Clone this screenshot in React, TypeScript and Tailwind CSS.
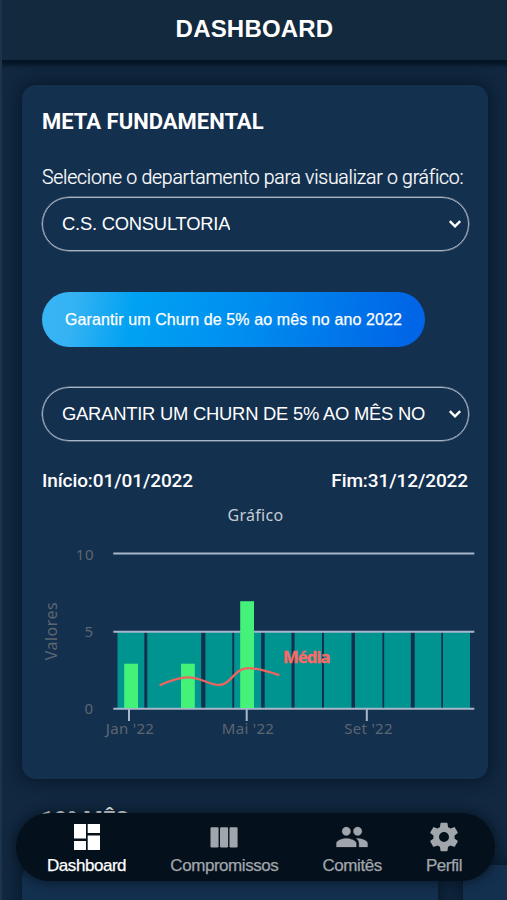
import React from 'react';

interface SelectFieldProps {
    value: string;
}

const SelectField: React.FC<SelectFieldProps> = ({ value }) => (
    <button type="button" className="flex h-[54px] w-[427px] items-center justify-between rounded-full border border-[#a9b6c6] pl-[19px] pr-[6px] text-left font-['Liberation_Sans',Arial,sans-serif] text-[18.4px] tracking-[-0.24px] text-white shadow-[0_0_0_0.5px_#8796a9]">
        <span className="overflow-hidden whitespace-nowrap">{value}</span>
        <svg className="h-[14px] w-[14px] shrink-0" viewBox="0 0 14 14" fill="none" stroke="white" strokeWidth="2.4">
            <path d="M1.8 4.2 7 9.4l5.2-5.2" />
        </svg>
    </button>
);

// months with the target area, as [start, end] on the x axis
const targetAreas = [
    [117.5, 144.3], [147.3, 201.2], [205.4, 232.3], [234.2, 261.2], [264.7, 291.5], [294.6, 322],
    [324, 351.5], [355, 382.4], [384.2, 410.8], [414.7, 441.3], [443, 470],
];

const bars = [
    { x: 124.2, y: 663.7 },
    { x: 181, y: 663.7 },
    { x: 240.2, y: 601.2 },
];

const Chart: React.FC = () => (
    <svg className="block h-[279px] w-[466px] font-['Noto_Sans',sans-serif]" viewBox="22 499 466 279">
        <text x="255.5" y="520.5" textAnchor="middle" fontSize="16" letterSpacing="0.3" fill="#c5ccd4">Gráfico</text>
        <g fill="#009491">
            {targetAreas.map(([start, end]) => (
                <rect key={start} x={start} y="632" width={end - start} height="76" />
            ))}
        </g>
        <g stroke="#a8b7cc" strokeWidth="2">
            <path d="M113.3 553.6H474.3M113.3 631.8H474.3M113.3 708.7H474.3" />
            <path d="M129 709v12M246.7 709v12M366.8 709v12" />
        </g>
        <g fill="#45f279">
            {bars.map(bar => (
                <rect key={bar.x} x={bar.x} y={bar.y} width="13.8" height={708 - bar.y} />
            ))}
        </g>
        <path d="M160.5 685C169 681 178 677.3 188 677.3C201 677.3 209 685 219 685C231 685 234 668.2 248 668.2C258 668.2 269 671.5 278.5 674.8" fill="none" stroke="#ee6460" strokeWidth="2.3" strokeLinecap="round" />
        <text x="283" y="663" fontSize="16.5" fontWeight="700" letterSpacing="-0.8" fill="#ff6865" stroke="#ff6865" strokeWidth="0.3">Média</text>
        <g fontSize="15" fill="#5d666f">
            <g textAnchor="end" letterSpacing="0.5">
                <text x="94" y="560">10</text>
                <text x="93.5" y="637">5</text>
                <text x="93.5" y="714">0</text>
            </g>
            <g textAnchor="middle" letterSpacing="0.3">
                <text x="130" y="733.5">Jan '22</text>
                <text x="248" y="733.5">Mai '22</text>
                <text x="368.5" y="733.5">Set '22</text>
            </g>
            <text transform="translate(57 631) rotate(-90)" textAnchor="middle" fontSize="16" letterSpacing="0.5">Valores</text>
        </g>
    </svg>
);

const DashboardIcon: React.FC = () => (
    <svg className="h-[30px] w-[30px]" viewBox="0 0 30 30" fill="currentColor">
        <path d="M2 2h12v14.6H2zM2 19h12v9H2zM15.7 2h12.3v9H15.7zM15.7 13.4h12.3V28H15.7z" />
    </svg>
);

const ColumnsIcon: React.FC = () => (
    <svg className="h-[30px] w-[30px]" viewBox="0 0 30 30" fill="currentColor">
        <rect x="1.5" y="5.2" width="8.1" height="20.2" rx="1.2" />
        <rect x="11" y="5.2" width="8.1" height="20.2" rx="1.2" />
        <rect x="20.5" y="5.2" width="8.1" height="20.2" rx="1.2" />
    </svg>
);

const PeopleIcon: React.FC = () => (
    <svg className="-my-0.5 h-[34px] w-[34px]" viewBox="0 0 24 24" fill="currentColor">
        <path d="M16 11c1.66 0 2.99-1.34 2.99-3S17.66 5 16 5s-3 1.34-3 3 1.34 3 3 3zm-8 0c1.66 0 2.99-1.34 2.99-3S9.66 5 8 5 5 6.34 5 8s1.34 3 3 3zm0 2c-2.33 0-7 1.17-7 3.5V19h14v-2.5c0-2.33-4.67-3.5-7-3.5zm8 0c-.29 0-.62.02-.97.05 1.16.84 1.97 1.97 1.97 3.45V19h6v-2.5c0-2.33-4.67-3.5-7-3.5z" stroke="currentColor" strokeWidth="0.2" />
    </svg>
);

const GearIcon: React.FC = () => (
    <svg className="-my-0.5 h-[34px] w-[34px]" viewBox="0 0 24 24" fill="currentColor">
        <path d="M19.43 12.98c.04-.32.07-.64.07-.98s-.03-.66-.07-.98l2.11-1.65c.19-.15.24-.42.12-.64l-2-3.46c-.12-.22-.39-.3-.61-.22l-2.49 1c-.52-.4-1.08-.73-1.69-.98l-.38-2.65C14.46 2.18 14.25 2 14 2h-4c-.25 0-.46.18-.49.42l-.38 2.65c-.61.25-1.17.59-1.69.98l-2.49-1c-.23-.09-.49 0-.61.22l-2 3.46c-.13.22-.07.49.12.64l2.11 1.65c-.04.32-.07.65-.07.98s.03.66.07.98l-2.11 1.65c-.19.15-.24.42-.12.64l2 3.46c.12.22.39.3.61.22l2.49-1c.52.4 1.08.73 1.69.98l.38 2.65c.03.24.24.42.49.42h4c.25 0 .46-.18.49-.42l.38-2.65c.61-.25 1.17-.59 1.69-.98l2.49 1c.23.09.49 0 .61-.22l2-3.46c.12-.22.07-.49-.12-.64l-2.11-1.65zM12 15.5c-1.93 0-3.5-1.57-3.5-3.5s1.57-3.5 3.5-3.5 3.5 1.57 3.5 3.5-1.57 3.5-3.5 3.5z" />
    </svg>
);

const BottomNav: React.FC = () => {
    const itemStyles = "flex shrink-0 flex-col items-center text-[17px] leading-[20px] tracking-[-0.45px] [-webkit-text-stroke:0.25px_currentColor]";

    return (
        <nav className="absolute left-[16px] top-[813px] flex h-[68px] w-[479px] items-start justify-between rounded-full bg-[#04101b] pl-[31px] pr-[33px] pt-[9px] font-['Liberation_Sans',Arial,sans-serif] text-[#a1a6ac] shadow-[0_0_10px_3px_rgba(3,14,24,0.55)]">
            <a className={`${itemStyles} text-white`}>
                <DashboardIcon />
                <span className="mt-[4px]">Dashboard</span>
            </a>
            <a className={itemStyles}>
                <ColumnsIcon />
                <span className="mt-[4px]">Compromissos</span>
            </a>
            <a className={itemStyles}>
                <PeopleIcon />
                <span className="mt-[4px]">Comitês</span>
            </a>
            <a className={itemStyles}>
                <GearIcon />
                <span className="mt-[4px]">Perfil</span>
            </a>
        </nav>
    );
};

const App: React.FC = () => {
    const cardStyles = "bg-[#14304f] shadow-[0_0_16px_3px_rgba(3,18,29,0.65)]";

    return (
        <div className="relative h-[900px] w-[507px] overflow-hidden border-l-2 border-[#1c3449] bg-[#112840] font-['Roboto',sans-serif] text-white">
            <div className="-ml-[2px]">
                <header className="relative z-10 ml-[2px] flex h-[60px] items-center justify-center bg-[#13293d] pb-[3px] shadow-[0_3px_4px_2px_#041424]">
                    <h1 className="font-['Liberation_Sans',Arial,sans-serif] text-[24px] font-bold tracking-[0.2px]">DASHBOARD</h1>
                </header>

                <main className="px-[22px] pt-[25px]">
                    <section className={`h-[694px] w-[466px] rounded-[14px] ${cardStyles}`}>
                        <div className="px-5 pt-[23px]">
                            <h2 className="text-[22px] font-bold leading-[28px]">META FUNDAMENTAL</h2>
                            <p className="mt-[28px] whitespace-nowrap text-[19.5px] font-light leading-[28px] tracking-[-0.27px] [-webkit-text-stroke:0.2px_currentColor]">Selecione o departamento para visualizar o gráfico:</p>
                            <div className="mt-[5px]">
                                <SelectField value="C.S. CONSULTORIA" />
                            </div>
                            <button type="button" className="mt-[41px] block h-[55px] w-[383px] whitespace-nowrap rounded-full bg-[linear-gradient(100deg,#37b5f3_0%,#34b2f3_9%,#00a2f2_24%,#0090f0_50%,#0065e6_96%)] pt-px font-['Liberation_Sans',Arial,sans-serif] text-[16px] tracking-[0.1px] [-webkit-text-stroke:0.25px_currentColor]">
                                Garantir um Churn de 5% ao mês no ano 2022
                            </button>
                            <div className="mt-[40px]">
                                <SelectField value="GARANTIR UM CHURN DE 5% AO MÊS NO" />
                            </div>
                            <div className="mt-[26px] flex h-[32px] justify-between text-[19px] font-medium leading-[27px] tracking-[-0.1px]">
                                <span>Início:01/01/2022</span>
                                <span>Fim:31/12/2022</span>
                            </div>
                        </div>
                        <Chart />
                    </section>

                    <h2 className="ml-[19px] mt-[27px] text-[22px] font-bold leading-[28px] tracking-[0.35px]">10º MÊS</h2>
                    <div className="mt-[31px] flex gap-[25px]">
                        <div className={`h-[60px] w-[416px] shrink-0 rounded-tl-[14px] rounded-tr-[14px] ${cardStyles}`} />
                        <div className={`h-[60px] w-[416px] shrink-0 rounded-tl-[4px] ${cardStyles}`} />
                    </div>
                </main>
            </div>
            <div className="absolute -left-[2px] top-0">
                <BottomNav />
            </div>
        </div>
    );
};

export default App;
